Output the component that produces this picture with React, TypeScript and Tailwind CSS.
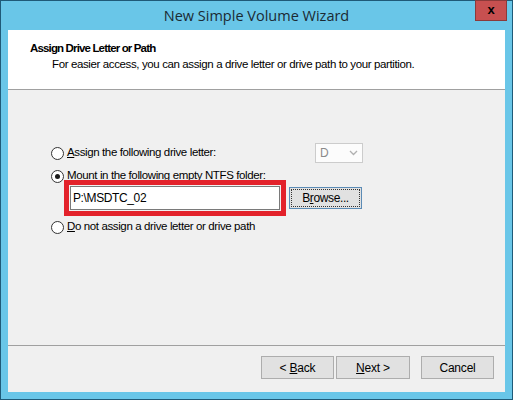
function Radio({ checked }: { checked?: boolean }) {
    return (
        <span className="flex items-center justify-center w-[13px] h-[13px] rounded-full border border-[#333333] bg-white shrink-0">
            {checked && <span className="w-[5px] h-[5px] rounded-full bg-[#1a1a1a]"/>}
        </span>
    );
}

function WinButton({ children, className = "" }: { children: React.ReactNode; className?: string }) {
    return (
        <button className={"h-[23px] bg-[#e1e1e1] border border-[#adadad] text-[12px] tracking-[-0.2px] text-black flex items-center justify-center " + className}>
            <span>{children}</span>
        </button>
    );
}

export default function App() {
    return (
        <div className="w-[513px] h-[400px] bg-[#69c6e8] border border-[#1f5a78] flex flex-col px-[7px] pb-[7px] font-['Liberation_Sans',Arial,sans-serif]">
            {/* title bar */}
            <div className="h-[29px] relative flex items-center justify-center shrink-0">
                <span className="text-[14.5px] text-[#1b2a33] font-['Open_Sans',sans-serif] mt-[1px]">New Simple Volume Wizard</span>
                <div className="absolute right-[-2px] top-[-1px] w-[32px] h-[21px] bg-[#c75050] border border-[#8b3a3a] flex items-center justify-center">
                    <span className="text-[13px] font-bold text-black leading-none mb-[2px]">x</span>
                </div>
            </div>

            {/* client */}
            <div className="flex-1 flex flex-col bg-[#f0f0f0]">
                <div className="h-[60px] bg-white border-b border-[#a0a0a0] pt-[11px] pl-[22px] shrink-0">
                    <div className="text-[11.5px] font-bold text-black leading-[14px] tracking-[-0.85px]">Assign Drive Letter or Path</div>
                    <div className="text-[11.5px] text-black leading-[14px] mt-[2px] pl-[22px] tracking-[-0.38px]">
                        For easier access, you can assign a drive letter or drive path to your partition.
                    </div>
                </div>

                <div className="flex-1 flex flex-col pl-[43px] pt-[53px] text-[11.5px] tracking-[-0.38px] text-black">
                    <div className="flex items-center h-[20px]">
                        <Radio/>
                        <span className="ml-[3px]"><u>A</u>ssign the following drive letter:</span>
                        <div className="ml-auto mr-[142px] w-[48px] h-[20px] bg-[#fcfcfc] border border-[#cccccc] flex items-center justify-between px-[4px] text-[#8a8a8a] text-[12px]">
                            <span>D</span>
                            <svg width="9" height="6" viewBox="0 0 9 6" fill="none">
                                <path d="M1 1 L4.5 4.5 L8 1" stroke="#b0b0b0" strokeWidth="1.3"/>
                            </svg>
                        </div>
                    </div>
                    <div className="flex items-center h-[20px] mt-[3px]">
                        <Radio checked/>
                        <span className="ml-[3px]"><u>M</u>ount in the following empty NTFS folder:</span>
                    </div>
                    <div className="flex items-center -mt-[6px] ml-[13px] relative">
                        <div className="w-[222px] h-[36px] border-[5px] border-[#e3222b] p-[1px]">
                            <div className="w-full h-full bg-white border border-[#7a7a7a] flex items-center pl-[2px] text-[12px]">
                                P:\MSDTC_02
                            </div>
                        </div>
                        <button className="ml-[3px] w-[73px] h-[22px] bg-[#e1e1e1] border border-[#5b8bb5] p-[1px] flex">
                            <span className="flex-1 border border-dotted border-[#333333] flex items-center justify-center text-[12px]">
                                <span>B<u>r</u>owse...</span>
                            </span>
                        </button>
                    </div>
                    <div className="flex items-center h-[20px] mt-[1px]">
                        <Radio/>
                        <span className="ml-[3px]"><u>D</u>o not assign a drive letter or drive path</span>
                    </div>
                </div>

                <div className="h-[47px] border-t border-[#a0a0a0] flex items-start justify-end pt-[10px] pr-[11px] shrink-0">
                    <WinButton className="w-[73px]">&lt; <u>B</u>ack</WinButton>
                    <WinButton className="w-[74px] ml-[2px]"><u>N</u>ext &gt;</WinButton>
                    <WinButton className="w-[73px] ml-[11px]">Cancel</WinButton>
                </div>
            </div>
        </div>
    );
}
